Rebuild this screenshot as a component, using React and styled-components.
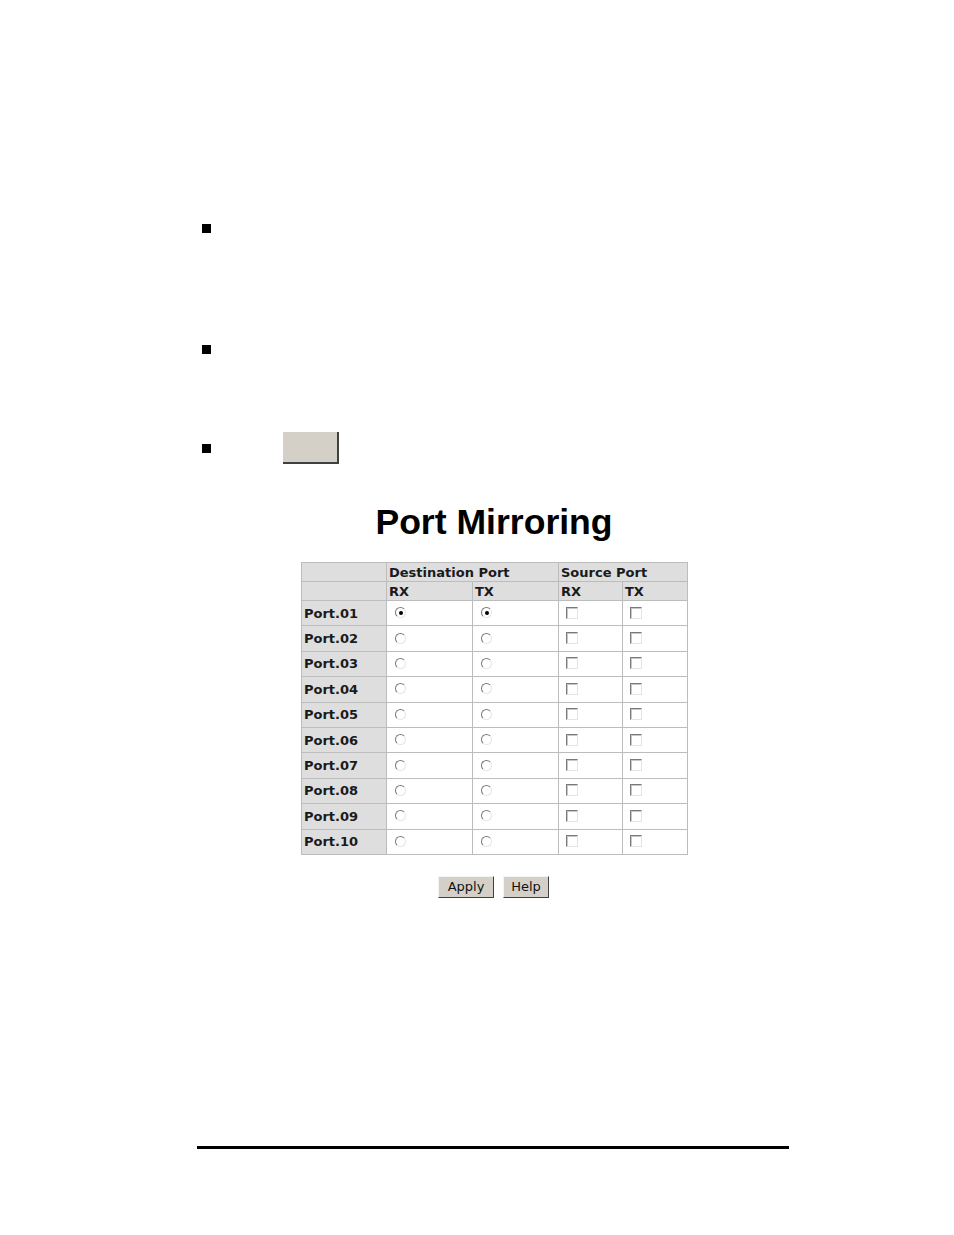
import React from 'react';
import styled, { createGlobalStyle } from 'styled-components';

const GlobalStyle = createGlobalStyle`
  html, body {
    margin: 0;
    padding: 0;
    background: #ffffff;
  }
  body {
    font-family: "Liberation Sans", Arial, sans-serif;
  }
`;

const Page = styled.div`
  width: 954px;
  height: 1235px;
  box-sizing: border-box;
  padding-top: 224px;
  display: flex;
  flex-direction: column;
`;

const BulletRow = styled.div`
  display: flex;
  align-items: center;
  height: ${(p) => p.h || 9}px;
  margin-top: ${(p) => p.top || 0}px;
  padding-left: 202px;
`;

const Bullet = styled.span`
  display: block;
  width: 9px;
  height: 9px;
  background: #000;
`;

const BlankButton = styled.span`
  display: block;
  width: 56px;
  height: 32px;
  margin-left: 72px;
  box-sizing: border-box;
  background: #d4d0c8;
  border-right: 2px solid #404040;
  border-bottom: 2px solid #404040;
`;

const Title = styled.h1`
  margin: 38px 0 0 0;
  text-align: center;
  font-family: "Liberation Sans", Arial, sans-serif;
  font-weight: bold;
  font-size: 35.6px;
  line-height: 40px;
  color: #000;
  width: 988px;
`;

const TableWrap = styled.div`
  display: flex;
  padding-left: 301px;
  margin-top: 20px;
`;

const Grid = styled.table`
  border-collapse: collapse;
  border: 1px solid #bcbcbc;
  font-family: "DejaVu Sans", Verdana, sans-serif;
  font-size: 13px;
  font-weight: bold;
  color: #1a1a1a;
`;

const Head = styled.td`
  background: #dedede;
  border: 1px solid #bcbcbc;
  height: 19px;
  padding: 0 2px;
  line-height: 17px;
  text-align: left;
  vertical-align: bottom;
  width: ${(p) => p.w}px;
  box-sizing: border-box;
`;

const Label = styled.td`
  background: #dedede;
  border: 1px solid #bcbcbc;
  height: 25.4px;
  padding: 0 2px;
  box-sizing: border-box;
  font-size: 13px;
`;

const Cell = styled.td`
  background: #fff;
  border: 1px solid #bcbcbc;
  height: 25.4px;
  padding: 0 0 0 ${(p) => p.pad || 8}px;
  box-sizing: border-box;
  vertical-align: middle;
`;

const Radio = styled.span`
  display: flex;
  align-items: center;
  justify-content: center;
  width: 11px;
  height: 11px;
  box-sizing: border-box;
  border-radius: 50%;
  border: 1px solid;
  border-color: #7a7a7a #e6e6e6 #e6e6e6 #7a7a7a;
  background: #fff;
  margin-top: -1px;
  &::after {
    content: '';
    display: ${(p) => (p.checked ? 'block' : 'none')};
    width: 4px;
    height: 4px;
    border-radius: 50%;
    background: #000;
  }
`;

const Check = styled.span`
  display: block;
  width: 12px;
  height: 12px;
  box-sizing: border-box;
  border: 1px solid;
  border-color: #7a7a7a #e4e4e4 #e4e4e4 #7a7a7a;
  box-shadow: inset 1px 1px 0 #c8c8c8;
  background: #fff;
  margin-top: -1px;
`;

const Actions = styled.div`
  display: flex;
  gap: 9px;
  padding-left: 438px;
  margin-top: 21px;
`;

const Btn = styled.span`
  display: flex;
  align-items: center;
  justify-content: center;
  height: 22px;
  width: ${(p) => p.w}px;
  box-sizing: border-box;
  background: #d4d0c8;
  border: 1px solid;
  border-color: #f4f4f4 #404040 #404040 #f4f4f4;
  font-family: "DejaVu Sans", Verdana, sans-serif;
  font-size: 13px;
  color: #111;
`;

const Spacer = styled.div`
  flex: 1;
`;

const Rule = styled.div`
  margin: 0 0 86px 197px;
  width: 592px;
  height: 3px;
  background: #000;
`;

const ports = Array.from({ length: 10 }, (_, i) => `Port.${String(i + 1).padStart(2, '0')}`);

export default function App() {
  return (
    <>
      <GlobalStyle />
      <Page>
        <BulletRow><Bullet /></BulletRow>
        <BulletRow top={112}><Bullet /></BulletRow>
        <BulletRow top={78} h={32}>
          <Bullet />
          <BlankButton />
        </BulletRow>
        <Title>Port Mirroring</Title>
        <TableWrap>
          <Grid>
            <tbody>
              <tr>
                <Head w={85}></Head>
                <Head colSpan={2}>Destination Port</Head>
                <Head colSpan={2}>Source Port</Head>
              </tr>
              <tr>
                <Head w={85}></Head>
                <Head w={86}>RX</Head>
                <Head w={86}>TX</Head>
                <Head w={64}>RX</Head>
                <Head w={65}>TX</Head>
              </tr>
              {ports.map((p, i) => (
                <tr key={p}>
                  <Label>{p}</Label>
                  <Cell><Radio checked={i === 0} /></Cell>
                  <Cell><Radio checked={i === 0} /></Cell>
                  <Cell pad={7}><Check /></Cell>
                  <Cell pad={7}><Check /></Cell>
                </tr>
              ))}
            </tbody>
          </Grid>
        </TableWrap>
        <Actions>
          <Btn w={56}>Apply</Btn>
          <Btn w={46}>Help</Btn>
        </Actions>
        <Spacer />
        <Rule />
      </Page>
    </>
  );
}
